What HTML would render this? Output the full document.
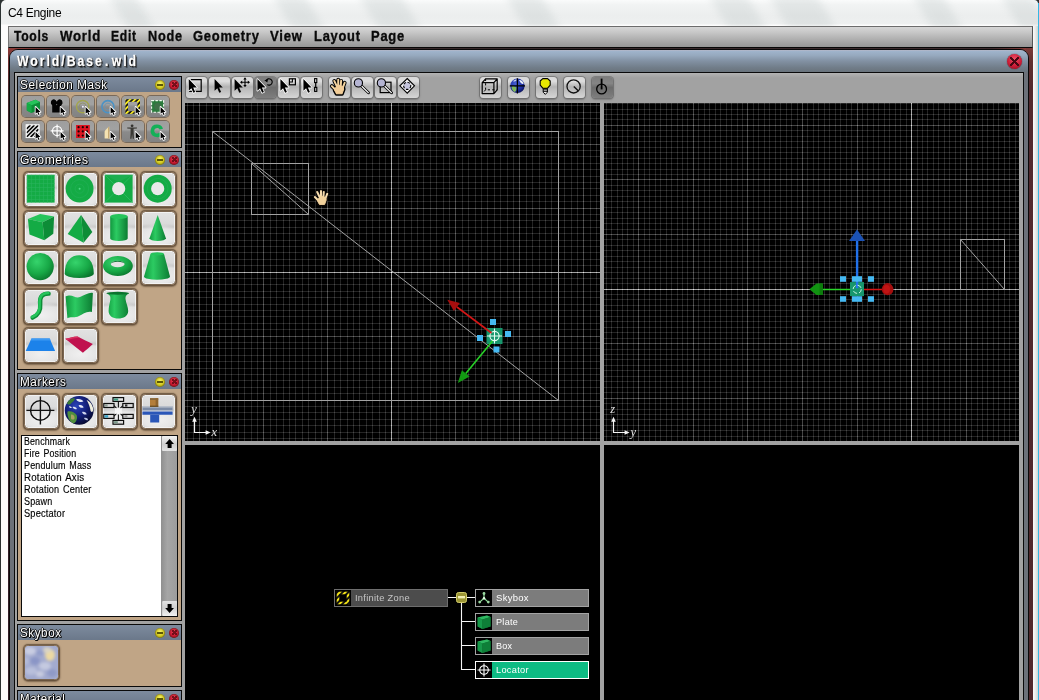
<!DOCTYPE html><html><head><meta charset="utf-8"><title>C4 Engine</title><style>
*{box-sizing:border-box;margin:0;padding:0}
html,body{width:1039px;height:700px;overflow:hidden;background:#2c3232;font-family:"Liberation Sans",sans-serif;}
.abs{position:absolute}
#frame{position:absolute;left:0;top:0;width:1039px;height:700px;overflow:hidden}
#fbg{position:absolute;left:1px;top:0;width:1036.6px;height:700px;border-radius:5px 4px 0 0;background:linear-gradient(180deg,#fafbfb 0,#f1f3f3 5px,#eceeee 16px,#eef0f0 24px,#fdfdfd 25px,#fdfdfd 26px);overflow:hidden}
#wtitle{position:absolute;left:8px;top:5.8px;font-size:12px;color:#000;letter-spacing:-.3px;white-space:nowrap}
#menubar{position:absolute;left:8px;top:26px;width:1025px;height:22px;border-top:1px solid #6c6c6c;border-bottom:1px solid #080808;border-left:1px solid #777;border-right:1px solid #555;background:linear-gradient(180deg,#d6d6d6 0,#c8c8c8 25%,#a6a6a6 75%,#969696 100%)}
.mi{position:absolute;top:-1.2px;height:20px;line-height:20px;font-size:15.2px;font-weight:bold;letter-spacing:.9px;color:#0a0a0a;white-space:nowrap;transform-origin:0 50%;-webkit-text-stroke:.35px #0a0a0a}
#brown{position:absolute;left:8px;top:48px;width:1025px;height:652px;background:linear-gradient(90deg,rgba(0,0,0,0) 0,rgba(0,0,0,0) 12px,#3a2829 60px,#36282a 50%,#3c2a2c 96%,rgba(0,0,0,0) 99.5%),linear-gradient(180deg,#8c3c38 0,#7a3434 8px,#4a282c 40px,#34202a 90px);}
#brownr{position:absolute;left:1026px;top:48px;width:7px;height:652px;background:linear-gradient(180deg,#7c3a38 0,#60302f 14px,#522a2e 40px,#50282c 100%)}
#iwin{position:absolute;left:9px;top:49px;width:1020px;height:660px;border:1px solid #0a0a0a;border-radius:9px 9px 0 0;background:#6c7179;overflow:hidden}
#ititle{position:absolute;left:0;top:0;width:1018px;height:22px;background:linear-gradient(180deg,#b6b8c8 0,#9fb3cb 1.5px,#96a9be 25%,#8291a3 50%,#717d89 80%,#69737c 100%)}
#ititle span{position:absolute;left:7px;top:1px;font-size:14.4px;font-weight:bold;letter-spacing:2.3px;color:#fff;white-space:nowrap;line-height:20px;-webkit-text-stroke:.3px #fff;text-shadow:1px 1px 0 #111,1px 0 0 #222,0 1px 0 #222,2px 2px 1px rgba(0,0,0,.5);transform-origin:0 50%}
#content{position:absolute;left:14px;top:72px;width:1010px;height:640px;border:1px solid #0a0a0a;background:linear-gradient(180deg,#b4b4b4 0,#a8a8a8 3px,#a2a2a2 5px)}
.pal{position:absolute;left:17px;width:165px;border:1px solid #0a0a0a;background:#c0a586;overflow:hidden}
.ph{position:absolute;left:0;top:0;width:163px;height:14.6px;background:linear-gradient(180deg,#7d8b9e,#6b788a)}
.ph span{position:absolute;left:2.4px;top:.8px;font-size:12px;line-height:15px;color:#fff;letter-spacing:.6px;white-space:nowrap;text-shadow:1px 1px 0 #000,-1px 0 0 #222,0 -1px 0 #333,1px 0 0 #111,0 1px 0 #111;transform-origin:0 50%}
.cy,.cr{position:absolute;top:2.7px;box-shadow:inset 0 0 1.5px .5px rgba(40,30,0,.55);width:10px;height:10px;border-radius:50%}
.cy{left:137px;background:radial-gradient(circle at 50% 35%,#f4f060 0,#d6cc20 55%,#8f8a10 100%)}
.cy:after{content:"";position:absolute;left:2px;top:4px;width:6px;height:2px;background:#5a5608}
.cr{left:151px;background:radial-gradient(circle at 50% 35%,#f04058 0,#c81830 55%,#7a0c18 100%)}
.cr:after{content:"";position:absolute;left:2.5px;top:2.5px;width:5px;height:5px;opacity:.8;background:linear-gradient(45deg,transparent 38%,#5a0810 38%,#5a0810 62%,transparent 62%),linear-gradient(-45deg,transparent 38%,#5a0810 38%,#5a0810 62%,transparent 62%)}
#iclose{position:absolute;left:1006.5px;top:53.5px;width:15px;height:15px;border-radius:50%;background:radial-gradient(circle at 50% 35%,#f05068 0,#cc1c36 55%,#800c1c 100%);box-shadow:0 0 1px #300}
#iclose:after{content:"";position:absolute;left:3px;top:3px;width:9px;height:9px;background:linear-gradient(45deg,transparent 43%,#4a0812 43%,#4a0812 57%,transparent 57%),linear-gradient(-45deg,transparent 43%,#4a0812 43%,#4a0812 57%,transparent 57%)}
.vp{position:absolute;background:#000;overflow:hidden}
.tb{position:absolute;top:76.5px;width:21px;height:21px;border-radius:3.5px;background:linear-gradient(180deg,#d8d8d8 0,#dedede 20%,#b2b2b2 47%,#bcbcbc 58%,#d6d6d6 100%);box-shadow:0 0 0 1px rgba(100,100,100,.55),0 1px 1.5px 1px rgba(60,60,60,.35)}
.tb.dn{background:linear-gradient(180deg,#7c7c7c 0,#858585 30%,#6c6c6c 50%,#7e7e7e 100%);}
.tb svg{position:absolute;left:-.6px;top:-.2px}
.sb{position:absolute;width:21.5px;height:21.8px;border-radius:4px;box-shadow:0 0 0 1px #78695a;background:linear-gradient(180deg,#9e9e9e 0,#a2a2a2 40%,#8a8a8a 52%,#828282 100%);overflow:hidden}
.gb{position:absolute;width:35px;height:35px;border-radius:4.5px;background:radial-gradient(ellipse 75% 40% at 50% 76%,#f0f0f0 0,#e6e6e6 60%,rgba(230,230,230,0) 100%),linear-gradient(180deg,#e2e2e2 0,#dadada 36%,#c8c8c8 46%,#dedede 53%,#dcdcdc 80%,#c4c4c4 100%);border:1.6px solid #7a6550;box-shadow:inset 0 0 0 .8px #f8f8f8,0 0 1.2px .4px rgba(90,70,50,.8),0 1.2px 1.5px .5px rgba(80,60,40,.5);overflow:hidden}
.gb svg{position:absolute;left:-1.8px;top:-1.9px}.sb svg{position:absolute;left:0;top:0}
.li{position:absolute;left:1.8px;-webkit-text-stroke:.15px #000;font-size:10px;line-height:12px;color:#000;white-space:nowrap;letter-spacing:.2px;word-spacing:1px;transform-origin:0 50%}
.nd{position:absolute;height:18px;border:1px solid #9c9c9c;background:#7a7a7a}
.nd i{position:absolute;left:0;top:0;width:16px;height:16px;background:#000;display:block}
.nd span{position:absolute;left:19.6px;top:0;font-size:9.6px;line-height:16px;color:#fff;white-space:nowrap;letter-spacing:.3px;transform-origin:0 50%}
</style></head><body>
<div id="frame">
<div class="abs" style="left:1037.4px;top:3px;width:2px;height:700px;background:#33b7e4"></div>
<div id="fbg"><svg width="1037" height="26" style="position:absolute;left:0;top:0"><defs><filter id="sb" x="-5%" y="-50%" width="110%" height="200%"><feGaussianBlur stdDeviation="4 1"/></filter></defs><g fill="#9aa8a8" opacity=".17" filter="url(#sb)"><path d="M108 -4L134 -4L154 30L128 30Z"/><path d="M272 -4L304 -4L324 30L292 30Z"/><path d="M358 -4L400 -4L420 30L378 30Z"/><path d="M505 -4L540 -4L560 30L525 30Z"/><path d="M708 -4L746 -4L766 30L728 30Z"/><path d="M768 -4L816 -4L836 30L788 30Z"/><path d="M912 -4L942 -4L962 30L932 30Z"/><path d="M1000 -4L1030 -4L1050 30L1020 30Z"/></g></svg><div class="abs" style="left:1032px;top:26px;width:5px;height:680px;background:linear-gradient(90deg,#fbfbfb,#e8ebea 50%,#cfd6d2)"></div></div>
<div id="wtitle">C4 Engine</div>
<div id="menubar">
<span class="mi" id="m0" style="left:5.4px;transform:scaleX(0.7977);">Tools</span>
<span class="mi" id="m1" style="left:51.4px;transform:scaleX(0.8677);">World</span>
<span class="mi" id="m2" style="left:102.4px;transform:scaleX(0.7988);">Edit</span>
<span class="mi" id="m3" style="left:139.4px;transform:scaleX(0.837);">Node</span>
<span class="mi" id="m4" style="left:184.4px;transform:scaleX(0.8527);">Geometry</span>
<span class="mi" id="m5" style="left:261.4px;transform:scaleX(0.8646);">View</span>
<span class="mi" id="m6" style="left:305.4px;transform:scaleX(0.848);">Layout</span>
<span class="mi" id="m7" style="left:362.4px;transform:scaleX(0.852);">Page</span>
</div>
<div id="brown"></div><div id="brownr"></div>
<div id="iwin"><div id="ititle"><span id="it" style="transform:scaleX(0.8515);">World/Base<b style="margin:0 1.5px 0 1.5px;font-weight:bold">.</b>wld</span></div></div>
<div id="iclose"></div>
<div id="content"></div>
<svg width="0" height="0" style="position:absolute"><defs>
<linearGradient id="gv" x1="0" y1="0" x2="0" y2="1"><stop offset="0" stop-color="#2cc862"/><stop offset="1" stop-color="#0e8c38"/></linearGradient>
<linearGradient id="gh" x1="0" y1="0" x2="1" y2="0"><stop offset="0" stop-color="#11983e"/><stop offset=".35" stop-color="#2ccb62"/><stop offset="1" stop-color="#0c7c32"/></linearGradient>
<radialGradient id="gs" cx=".38" cy=".32" r=".75"><stop offset="0" stop-color="#36d46c"/><stop offset=".6" stop-color="#17a846"/><stop offset="1" stop-color="#0a742c"/></radialGradient>
<radialGradient id="earth" cx=".4" cy=".35" r=".75"><stop offset="0" stop-color="#2c44b8"/><stop offset=".5" stop-color="#121e78"/><stop offset="1" stop-color="#03051e"/></radialGradient>
<pattern id="gridp" width="4" height="4" patternUnits="userSpaceOnUse"><path d="M0 .5H4M.5 0V4" stroke="#2ab45f" stroke-width=".5" fill="none"/></pattern>
</defs></svg>
<div class="pal" style="top:76px;height:72px"><div class="ph"><span class="pt" id="pt0" style="transform:scaleX(0.9757);">Selection Mask</span><div class="cy"></div><div class="cr"></div></div><div class="sb" style="left:4.3px;top:18.5px"><svg width="21.5" height="21.8" viewBox="0 0 21.5 21.8"><path d="M4.8 7L13.4 3.8L18 6V13.6L9.6 17L4.8 14.4Z" fill="#0d8d37"/><path d="M4.8 7L13.4 3.8L18 6L9.6 9.2Z" fill="#26c45b"/><path d="M4.8 7L9.6 9.2V17L4.8 14.4Z" fill="#14ab45"/><path transform="translate(13.6,10.9)" d="M0 0V6.8L1.7 5.4L2.9 8L4 7.5L2.8 5H4.9Z" fill="#fff" stroke="#fff" stroke-width="1.7" stroke-linejoin="round"/><path transform="translate(13.6,10.9)" d="M0 0V6.8L1.7 5.4L2.9 8L4 7.5L2.8 5H4.9Z" fill="#000"/></svg></div><div class="sb" style="left:29.3px;top:18.5px"><svg width="21.5" height="21.8" viewBox="0 0 21.5 21.8"><path d="M5.2 16.6V9.6L3.9 7.6C3.6 5 5 3.6 6.8 3.6C8 3.6 8.8 4.4 9 5.2H10.4C10.6 4.4 11.4 3.6 12.6 3.6C14.4 3.6 15.8 5 15.5 7.6L14.2 9.6V16.6Z" fill="#030303"/><circle cx="6.8" cy="5.6" r="2.2" fill="#030303"/><circle cx="12.6" cy="5.6" r="2.2" fill="#030303"/><circle cx="9.6" cy="8.6" r=".7" fill="#666"/><path transform="translate(13.6,10.9)" d="M0 0V6.8L1.7 5.4L2.9 8L4 7.5L2.8 5H4.9Z" fill="#fff" stroke="#fff" stroke-width="1.7" stroke-linejoin="round"/><path transform="translate(13.6,10.9)" d="M0 0V6.8L1.7 5.4L2.9 8L4 7.5L2.8 5H4.9Z" fill="#000"/></svg></div><div class="sb" style="left:54.3px;top:18.5px"><svg width="21.5" height="21.8" viewBox="0 0 21.5 21.8"><circle cx="10.7" cy="10.6" r="6.2" fill="none" stroke="#a2a44e" stroke-width="1.5"/><circle cx="10.7" cy="10.6" r="3.6" fill="none" stroke="#8f9060" stroke-width=".8"/><circle cx="10.9" cy="10.7" r="1" fill="#eeeefc"/><path transform="translate(13.6,10.9)" d="M0 0V6.8L1.7 5.4L2.9 8L4 7.5L2.8 5H4.9Z" fill="#fff" stroke="#fff" stroke-width="1.7" stroke-linejoin="round"/><path transform="translate(13.6,10.9)" d="M0 0V6.8L1.7 5.4L2.9 8L4 7.5L2.8 5H4.9Z" fill="#000"/></svg></div><div class="sb" style="left:79.3px;top:18.5px"><svg width="21.5" height="21.8" viewBox="0 0 21.5 21.8"><circle cx="10.9" cy="10.6" r="6" fill="none" stroke="#4c92c4" stroke-width="1.6"/><circle cx="10.9" cy="10.6" r="3.4" fill="none" stroke="#6c93b0" stroke-width=".9"/><path transform="translate(13.6,10.9)" d="M0 0V6.8L1.7 5.4L2.9 8L4 7.5L2.8 5H4.9Z" fill="#fff" stroke="#fff" stroke-width="1.7" stroke-linejoin="round"/><path transform="translate(13.6,10.9)" d="M0 0V6.8L1.7 5.4L2.9 8L4 7.5L2.8 5H4.9Z" fill="#000"/></svg></div><div class="sb" style="left:104.3px;top:18.5px"><svg width="21.5" height="21.8" viewBox="0 0 21.5 21.8"><defs><pattern id="hz2" width="3.6" height="3.6" patternUnits="userSpaceOnUse" patternTransform="rotate(45)"><rect width="1.9" height="3.6" fill="#f6e81a"/><rect x="1.9" width="1.7" height="3.6" fill="#0c0c0c"/></pattern></defs><rect x="4.7" y="4.5" width="12" height="12" fill="none" stroke="url(#hz2)" stroke-width="2.6"/><path transform="translate(13.6,10.9)" d="M0 0V6.8L1.7 5.4L2.9 8L4 7.5L2.8 5H4.9Z" fill="#fff" stroke="#fff" stroke-width="1.7" stroke-linejoin="round"/><path transform="translate(13.6,10.9)" d="M0 0V6.8L1.7 5.4L2.9 8L4 7.5L2.8 5H4.9Z" fill="#000"/></svg></div><div class="sb" style="left:129.3px;top:18.5px"><svg width="21.5" height="21.8" viewBox="0 0 21.5 21.8"><rect x="4.6" y="4.6" width="12" height="11.6" fill="#2a7a3c"/><circle cx="10.6" cy="10.4" r="3.4" fill="#3f7048"/><rect x="4.6" y="4.6" width="12" height="11.6" fill="none" stroke="#f0fff0" stroke-width="1.1" stroke-dasharray="2.4 1.5"/><path transform="translate(13.6,10.9)" d="M0 0V6.8L1.7 5.4L2.9 8L4 7.5L2.8 5H4.9Z" fill="#fff" stroke="#fff" stroke-width="1.7" stroke-linejoin="round"/><path transform="translate(13.6,10.9)" d="M0 0V6.8L1.7 5.4L2.9 8L4 7.5L2.8 5H4.9Z" fill="#000"/></svg></div><div class="sb" style="left:4.3px;top:43.7px"><svg width="21.5" height="21.8" viewBox="0 0 21.5 21.8"><rect x="3.8" y="3.4" width="13.6" height="13.6" fill="#f4f4f4"/><path d="M4.6 8L8.4 4.2M4.6 12L12.4 4.2M4.6 16L16.4 4.2M8.6 16.2L16.6 8.2M12.6 16.2L16.6 12.2" stroke="#0a0a0a" stroke-width="1.7"/><rect x="4.2" y="3.8" width="12.8" height="12.8" fill="none" stroke="#f4f4f4" stroke-width="1"/><path transform="translate(13.6,10.9)" d="M0 0V6.8L1.7 5.4L2.9 8L4 7.5L2.8 5H4.9Z" fill="#fff" stroke="#fff" stroke-width="1.7" stroke-linejoin="round"/><path transform="translate(13.6,10.9)" d="M0 0V6.8L1.7 5.4L2.9 8L4 7.5L2.8 5H4.9Z" fill="#000"/></svg></div><div class="sb" style="left:29.3px;top:43.7px"><svg width="21.5" height="21.8" viewBox="0 0 21.5 21.8"><circle cx="10.1" cy="9.9" r="4.6" fill="none" stroke="#fff" stroke-width="1.2"/><path d="M10.1 3.4V16.4M3.6 9.9H16.6" stroke="#fff" stroke-width="1.2"/><path transform="translate(13.6,10.9)" d="M0 0V6.8L1.7 5.4L2.9 8L4 7.5L2.8 5H4.9Z" fill="#fff" stroke="#fff" stroke-width="1.7" stroke-linejoin="round"/><path transform="translate(13.6,10.9)" d="M0 0V6.8L1.7 5.4L2.9 8L4 7.5L2.8 5H4.9Z" fill="#000"/></svg></div><div class="sb" style="left:54.3px;top:43.7px"><svg width="21.5" height="21.8" viewBox="0 0 21.5 21.8"><rect x="4" y="4" width="13.8" height="13" fill="#dc1420"/><g fill="#160404"><circle cx="6.6" cy="6.2" r="1.1"/><circle cx="10.8" cy="6.2" r="1.1"/><circle cx="15" cy="6.2" r="1.1"/><circle cx="6.6" cy="10.4" r="1.1"/><circle cx="10.8" cy="10.4" r="1.1"/><circle cx="15" cy="10.4" r="1.1"/><circle cx="6.6" cy="14.6" r="1.1"/><circle cx="10.8" cy="14.6" r="1.1"/></g><path transform="translate(13.6,10.9)" d="M0 0V6.8L1.7 5.4L2.9 8L4 7.5L2.8 5H4.9Z" fill="#fff" stroke="#fff" stroke-width="1.7" stroke-linejoin="round"/><path transform="translate(13.6,10.9)" d="M0 0V6.8L1.7 5.4L2.9 8L4 7.5L2.8 5H4.9Z" fill="#000"/></svg></div><div class="sb" style="left:79.3px;top:43.7px"><svg width="21.5" height="21.8" viewBox="0 0 21.5 21.8"><path d="M7.6 10.6C8.6 8.6 10.8 6.6 12.2 5.6C12 8 12.6 10 12.6 12V17.6H7.6Z" fill="#f4e2b2"/><path d="M11 6.6L12.2 5.6C12 8 12.6 10 12.6 12V17.6H11Z" fill="#c8aa72"/><path transform="translate(13.6,10.9)" d="M0 0V6.8L1.7 5.4L2.9 8L4 7.5L2.8 5H4.9Z" fill="#fff" stroke="#fff" stroke-width="1.7" stroke-linejoin="round"/><path transform="translate(13.6,10.9)" d="M0 0V6.8L1.7 5.4L2.9 8L4 7.5L2.8 5H4.9Z" fill="#000"/></svg></div><div class="sb" style="left:104.3px;top:43.7px"><svg width="21.5" height="21.8" viewBox="0 0 21.5 21.8"><circle cx="10.1" cy="4.8" r="1.4" fill="#34332f"/><path d="M5.2 6.6L8.8 6.4H11.4L15 6.6L14.9 7.6L11.6 7.8V12L12 17.8H10.7L10.1 13L9.5 17.8H8.2L8.6 12V7.8L5.3 7.6Z" fill="#3a3934"/><path transform="translate(13.6,10.9)" d="M0 0V6.8L1.7 5.4L2.9 8L4 7.5L2.8 5H4.9Z" fill="#fff" stroke="#fff" stroke-width="1.7" stroke-linejoin="round"/><path transform="translate(13.6,10.9)" d="M0 0V6.8L1.7 5.4L2.9 8L4 7.5L2.8 5H4.9Z" fill="#000"/></svg></div><div class="sb" style="left:129.3px;top:43.7px"><svg width="21.5" height="21.8" viewBox="0 0 21.5 21.8"><path d="M9.9 3.6A6.3 6.3 0 1 0 15.4 13L12.3 11.4A2.8 2.8 0 1 1 12.6 8.6L16 7.8A6.3 6.3 0 0 0 9.9 3.6Z" fill="#12b058"/><path transform="translate(13.6,10.9)" d="M0 0V6.8L1.7 5.4L2.9 8L4 7.5L2.8 5H4.9Z" fill="#fff" stroke="#fff" stroke-width="1.7" stroke-linejoin="round"/><path transform="translate(13.6,10.9)" d="M0 0V6.8L1.7 5.4L2.9 8L4 7.5L2.8 5H4.9Z" fill="#000"/></svg></div></div>
<div class="pal" style="top:151px;height:219px"><div class="ph"><span class="pt" id="pt1" style="transform:scaleX(1.0084);">Geometries</span><div class="cy"></div><div class="cr"></div></div><div class="gb" style="left:5.9px;top:20.3px"><svg width="35" height="35" viewBox="0 0 35 35"><rect x="3.8" y="3.8" width="27.8" height="27.8" fill="#14ab45"/><rect x="3.8" y="3.8" width="27.8" height="27.8" fill="url(#gridp)"/></svg></div><div class="gb" style="left:44.9px;top:20.3px"><svg width="35" height="35" viewBox="0 0 35 35"><circle cx="17.6" cy="17.7" r="13.9" fill="#14ab45"/><circle cx="17.6" cy="17.7" r="9" fill="none" stroke="#25b059" stroke-width=".6"/><circle cx="17.6" cy="17.7" r="4.5" fill="none" stroke="#25b059" stroke-width=".6"/><circle cx="17.6" cy="17.7" r="1" fill="#4fd884"/></svg></div><div class="gb" style="left:83.9px;top:20.3px"><svg width="35" height="35" viewBox="0 0 35 35"><rect x="3.8" y="3.8" width="27.8" height="27.8" fill="#14ab45"/><path d="M3.8 3.8L31.6 31.6M31.6 3.8L3.8 31.6" stroke="#2cbc62" stroke-width=".8"/><path d="M3.8 3.8L17.7 11L31.6 3.8Z" fill="#23b058" opacity=".6"/><circle cx="17.7" cy="17.7" r="6.6" fill="#e9e9e9"/></svg></div><div class="gb" style="left:122.9px;top:20.3px"><svg width="35" height="35" viewBox="0 0 35 35"><circle cx="17.7" cy="17.7" r="14" fill="#14ab45"/><circle cx="17.7" cy="17.7" r="10.3" fill="none" stroke="#25b059" stroke-width=".6"/><circle cx="17.7" cy="17.7" r="6.6" fill="#e9e9e9"/></svg></div><div class="gb" style="left:5.9px;top:59.3px"><svg width="35" height="35" viewBox="0 0 35 35"><path d="M4.9 9L17.2 4.1L31.1 6.5L19.6 12.3Z" fill="#26c45b"/><path d="M4.9 9L19.6 12.3L21.3 30.3L6.5 24.5Z" fill="#14ab45"/><path d="M19.6 12.3L31.1 6.5L30.3 23.7L21.3 30.3Z" fill="#0d8d37"/></svg></div><div class="gb" style="left:44.9px;top:59.3px"><svg width="35" height="35" viewBox="0 0 35 35"><path d="M19.1 4.9L5.7 24L21.6 32.7Z" fill="#14ab45"/><path d="M19.1 4.9L21.6 32.7L30.3 22.1Z" fill="#0d8d37"/></svg></div><div class="gb" style="left:83.9px;top:59.3px"><svg width="35" height="35" viewBox="0 0 35 35"><path d="M9.2 6.5V28.4A8.75 2.6 0 0 0 26.7 28.4V6.5Z" fill="url(#gh)"/><ellipse cx="17.95" cy="6.5" rx="8.75" ry="2.4" fill="#26c45b"/></svg></div><div class="gb" style="left:122.9px;top:59.3px"><svg width="35" height="35" viewBox="0 0 35 35"><path d="M17.7 4.9L9.5 28.3A8.2 2.6 0 0 0 25.9 28.3Z" fill="url(#gh)"/></svg></div><div class="gb" style="left:5.9px;top:98.3px"><svg width="35" height="35" viewBox="0 0 35 35"><circle cx="17.2" cy="17.6" r="13.6" fill="url(#gs)"/></svg></div><div class="gb" style="left:44.9px;top:98.3px"><svg width="35" height="35" viewBox="0 0 35 35"><path d="M2.7 24.5C2.7 12 9 6.2 17.2 6.2C25.5 6.2 31.8 12 31.8 24.5A14.55 4.6 0 0 1 2.7 24.5Z" fill="url(#gs)"/></svg></div><div class="gb" style="left:83.9px;top:98.3px"><svg width="35" height="35" viewBox="0 0 35 35"><ellipse cx="16.9" cy="17" rx="14.9" ry="10" fill="url(#gs)"/><ellipse cx="16.7" cy="15" rx="6.9" ry="3.3" fill="#e4e4e4"/><path d="M9.8 15A6.9 3.3 0 0 1 23.6 15A6.9 2.2 0 0 0 9.8 15Z" fill="#0d7a34"/></svg></div><div class="gb" style="left:122.9px;top:98.3px"><svg width="35" height="35" viewBox="0 0 35 35"><path d="M10.5 4.9L4 27.4A13 3.4 0 0 0 30 27.4L24 4.9Z" fill="url(#gh)"/><ellipse cx="17.25" cy="4.9" rx="6.75" ry="1.6" fill="#26c45b"/></svg></div><div class="gb" style="left:5.9px;top:137.3px"><svg width="35" height="35" viewBox="0 0 35 35"><path d="M25.6 5.6C18 5.5 16.5 10 17.2 16.5C18 24.5 14 27.5 9.6 29.6" fill="none" stroke="#0d8d37" stroke-width="4.4" stroke-linecap="round"/><path d="M25.2 5C18 5 16 10 16.6 16.5C17.3 24 13.6 27 9.2 29" fill="none" stroke="#26c45b" stroke-width="2.6" stroke-linecap="round"/></svg></div><div class="gb" style="left:44.9px;top:137.3px"><svg width="35" height="35" viewBox="0 0 35 35"><path d="M3.6 8.5C10 5 13 11 18 9C23 7 27 4 30.9 4.9L29.9 24C25 22.5 21 26 17 28C12 30.5 9 28 5.4 30.3Z" fill="url(#gh)"/></svg></div><div class="gb" style="left:83.9px;top:137.3px"><svg width="35" height="35" viewBox="0 0 35 35"><path d="M5.4 5.3C9 7 9.8 8.5 9.4 11.5C8.8 15 7.6 19 7.6 23C7.6 28 12 30.6 17.2 30.6C22.5 30.6 27.2 28 27.2 23C27.2 19 25 15 24.6 11.5C24.3 8.5 25 7 28.1 5.3Z" fill="url(#gh)"/><ellipse cx="16.75" cy="5.3" rx="11.35" ry="1.5" fill="#0a732e"/></svg></div><div class="gb" style="left:5.9px;top:176.3px"><svg width="35" height="35" viewBox="0 0 35 35"><path d="M8.5 11.6H26.7L32.1 24H2.7Z" fill="#1c82ea"/><path d="M8.5 11.6H26.7L27.6 13.6H7.6Z" fill="#3c9af4"/></svg></div><div class="gb" style="left:44.9px;top:176.3px"><svg width="35" height="35" viewBox="0 0 35 35"><path d="M3.3 11.8C7 10.8 11 9.6 15.4 9.4C21 12 26 14.6 30.9 17.1C27.5 20 24.5 23 20.9 25.8C15 21 9 16.5 3.3 11.8Z" fill="#c0124e"/><path d="M3.3 11.8C7 10.8 11 9.6 15.4 9.4L18 10.6C13 11 9 12 5.2 13.2Z" fill="#d8305f"/></svg></div></div>
<div class="pal" style="top:373px;height:248px"><div class="ph"><span class="pt" id="pt2" style="transform:scaleX(0.9759);">Markers</span><div class="cy"></div><div class="cr"></div></div><div class="gb" style="left:5.9px;top:20.3px"><svg width="35" height="35" viewBox="0 0 35 35"><circle cx="17.4" cy="17.4" r="9.8" fill="none" stroke="#111" stroke-width="1.4"/><path d="M17.4 3.4V31.4M3.4 17.4H31.4" stroke="#111" stroke-width="1.4"/></svg></div><div class="gb" style="left:44.9px;top:20.3px"><svg width="35" height="35" viewBox="0 0 35 35"><defs><filter id="eb" x="-10%" y="-10%" width="120%" height="120%"><feGaussianBlur stdDeviation=".55"/></filter><clipPath id="ec"><circle cx="17.2" cy="17.4" r="14.2"/></clipPath></defs><circle cx="17.2" cy="17.4" r="14.4" fill="url(#earth)"/><g clip-path="url(#ec)" filter="url(#eb)"><path d="M5 9C7 6 10.5 4.6 13 5.6C12.4 8.4 10 9.6 8 11.4C6.4 12 4.8 11 5 9Z" fill="#3b7a36"/><path d="M5.6 18.6C8.6 17.6 12.4 19 14.6 22C16 25.6 14 29.4 11 31C7.4 28.4 4.8 23.4 5.6 18.6Z" fill="#4f8f3c"/><path d="M9 21.6C11 21.4 12.8 23 12.6 25.4C11.4 27 9.8 27 9 25.4Z" fill="#a9a264"/><path d="M24.6 7C27.6 8 30.4 11.4 31.2 15.4C31.4 18.6 30 20 28.6 18C28 14 26.6 10.4 24.6 7Z" fill="#efeedd"/><path d="M14 6.4C17 5.4 20.4 6.4 21.4 8.6C19 9.6 16 8.8 14 6.4Z" fill="#e6eaf6"/><path d="M16.6 12.4C18.8 11.4 21 12.4 21.6 14.4C19.4 15.2 17.4 14.4 16.6 12.4Z" fill="#e6eaf6"/><path d="M10.6 14C12.6 13.2 14.4 14.2 14.8 16C13 16.6 11.2 15.8 10.6 14Z" fill="#dfe4f2"/><path d="M20 19C22.4 18.4 24.4 19.6 24.6 21.4C22.6 22 20.6 21 20 19Z" fill="#cfd6ee"/><path d="M7 13.4C8.4 13 9.6 13.8 9.8 15C8.6 15.4 7.4 14.8 7 13.4Z" fill="#e4e8f4"/><path d="M22 25C24 24.4 26 25.4 26 27C24.4 27.6 22.6 26.6 22 25Z" fill="#b8c2e4"/></g></svg></div><div class="gb" style="left:83.9px;top:20.3px"><svg width="35" height="35" viewBox="0 0 35 35"><path d="M17.4 8.6V14.4M17.4 21.4V27M13 12.6L15.8 15.6M21.8 12.6L19 15.6M13 23.2L15.8 20.2M21.8 23.2L19 20.2" fill="none" stroke="#111" stroke-width="1.1"/><path d="M14 15H20.8V21H14Z" fill="#fafafa" opacity=".8"/><g stroke="#0c0c0c" stroke-width="1.2"><rect x="12" y="4.6" width="10.6" height="3.8" fill="#e4e4e4"/><rect x="2.8" y="10.5" width="10.2" height="4" fill="#dcdcdc"/><rect x="21.8" y="10.5" width="10.4" height="4" fill="#dcdcdc"/><rect x="2.8" y="21.4" width="10.2" height="4" fill="#dcdcdc"/><rect x="21.8" y="21.4" width="10.4" height="4" fill="#dcdcdc"/><rect x="12" y="27.4" width="10.6" height="3.8" fill="#dcdcdc"/></g><rect x="12.8" y="5.4" width="4.4" height="2.2" fill="#3f9a82"/><rect x="3.6" y="22.2" width="3.6" height="2.4" fill="#3aa6c8"/><rect x="4" y="11.4" width="2.6" height="2.2" fill="#8a9a90"/><rect x="24" y="11.4" width="2.4" height="2.2" fill="#303030"/><rect x="12.8" y="28.2" width="4" height="2.2" fill="#7a9a8a"/><rect x="23.4" y="22.2" width="3" height="2.2" fill="#9a9a9a"/></svg></div><div class="gb" style="left:122.9px;top:20.3px"><svg width="35" height="35" viewBox="0 0 35 35"><path d="M2.4 13.2H32.6V18H2.4Z" fill="#7d8ca6"/><path d="M2.4 13.2H32.6V14.6H2.4Z" fill="#c4cad2"/><path d="M2.4 17.4H32.6V18.4H2.4Z" fill="#e6e8ee"/><path d="M2.4 18.4H32.6V21.8H2.4Z" fill="#2a56b8"/><path d="M10.2 21.8H19.2V29.4H10.2Z" fill="#2a56b8"/><rect x="10" y="5.2" width="8.2" height="8.8" fill="#b47e3a"/><rect x="10" y="5.2" width="8.2" height="1.8" fill="#86683c"/><rect x="15.6" y="5.2" width="2.6" height="8.8" fill="#8e642e"/><rect x="10" y="12.6" width="8.2" height="1.4" fill="#6e5226"/></svg></div><div class="abs" style="left:3px;top:61px;width:157px;height:182px;border:1px solid #0a0a0a;background:#fff;overflow:hidden"><div class="li" id="li0" style="top:-0.4px;transform:scaleX(0.878);">Benchmark</div><div class="li" id="li1" style="top:11.6px;transform:scaleX(0.8836);">Fire Position</div><div class="li" id="li2" style="top:23.6px;transform:scaleX(0.8949);">Pendulum Mass</div><div class="li" id="li3" style="top:35.6px;transform:scaleX(0.9731);">Rotation Axis</div><div class="li" id="li4" style="top:47.6px;transform:scaleX(0.9102);">Rotation Center</div><div class="li" id="li5" style="top:59.6px;transform:scaleX(0.8994);">Spawn</div><div class="li" id="li6" style="top:71.6px;transform:scaleX(0.9236);">Spectator</div><div class="abs" style="left:139.3px;top:0;width:15.7px;height:180px;background:linear-gradient(90deg,#8f8f8f,#a6a6a6 40%,#9c9c9c)"></div><div class="abs" style="left:139.6px;top:.4px;width:15.2px;height:15px;border-radius:1px;background:linear-gradient(180deg,#f2f2f2,#cfcfcf 55%,#e2e2e2)"><svg width="15" height="15" viewBox="-.6 -.5 15 15" style="position:absolute;left:0;top:0"><path d="M7 2.6L2.6 7.4H5V11.4H9V7.4H11.4Z" fill="#000"/></svg></div><div class="abs" style="left:139.6px;top:164.6px;width:15.2px;height:15px;border-radius:1px;background:linear-gradient(180deg,#f2f2f2,#cfcfcf 55%,#e2e2e2);transform:rotate(180deg)"><svg width="15" height="15" viewBox="-.6 -.5 15 15" style="position:absolute;left:0;top:0"><path d="M7 2.6L2.6 7.4H5V11.4H9V7.4H11.4Z" fill="#000"/></svg></div></div></div>
<div class="pal" style="top:624px;height:63px"><div class="ph"><span class="pt" id="pt3" style="transform:scaleX(0.9685);">Skybox</span><div class="cy"></div><div class="cr"></div></div><div class="gb" style="left:5.9px;top:20px"><svg width="35" height="35" viewBox="0 0 35 35"><defs><filter id="bl" x="-20%" y="-20%" width="140%" height="140%"><feGaussianBlur stdDeviation="1.6"/></filter></defs><rect width="35" height="35" fill="#a3abcf"/><g filter="url(#bl)"><ellipse cx="7" cy="7" rx="6" ry="4" fill="#c9cde2"/><ellipse cx="27" cy="11" rx="5" ry="6" fill="#ecd9a2"/><ellipse cx="24" cy="6" rx="4" ry="3" fill="#d9d4c4"/><ellipse cx="12" cy="17" rx="5" ry="4" fill="#8a95c6"/><ellipse cx="22" cy="22" rx="6" ry="4" fill="#c4c9e0"/><ellipse cx="8" cy="27" rx="6" ry="4" fill="#b9c0dc"/><ellipse cx="29" cy="29" rx="5" ry="4" fill="#8f9ac8"/><ellipse cx="17" cy="9" rx="4" ry="3" fill="#929dca"/><ellipse cx="17" cy="30" rx="4" ry="3" fill="#c8cce0"/><ellipse cx="3" cy="17" rx="3" ry="4" fill="#b4bbd8"/></g></svg></div></div>
<div class="pal" style="top:690px;height:40px"><div class="ph"><span class="pt" id="pt4" style="transform:scaleX(0.9561);">Material</span><div class="cy"></div><div class="cr"></div></div></div>
<div class="tb" style="left:185.5px"><svg width="21" height="21" viewBox="0 0 21 21"><path d="M5.8 3.6H16.2V15.4H3.8" fill="none" stroke="#000" stroke-width="1.2"/><path transform="translate(3.7,3.1)" d="M0 0V11.6L2.7 9.1L4.7 13.7L6.5 12.9L4.5 8.5H8.2Z" fill="#fff" stroke="#fff" stroke-width="1.6" stroke-linejoin="round"/><path transform="translate(3.7,3.1)" d="M0 0V11.6L2.7 9.1L4.7 13.7L6.5 12.9L4.5 8.5H8.2Z" fill="#000"/></svg></div>
<div class="tb" style="left:208.5px"><svg width="21" height="21" viewBox="0 0 21 21"><path transform="translate(6.6,3.1)" d="M0 0V11.6L2.7 9.1L4.7 13.7L6.5 12.9L4.5 8.5H8.2Z" fill="#000"/></svg></div>
<div class="tb" style="left:231.5px"><svg width="21" height="21" viewBox="0 0 21 21"><path transform="translate(3.6,3.1)" d="M0 0V11.6L2.7 9.1L4.7 13.7L6.5 12.9L4.5 8.5H8.2Z" fill="#000"/><path d="M14 2.4V10M10.2 6.2H17.8" stroke="#000" stroke-width="1.1" fill="none"/><path d="M14 1.2L12.3 3.4H15.7ZM14 11.2L12.3 9H15.7ZM9 6.2L11.2 4.5V7.9ZM19 6.2L16.8 4.5V7.9Z" fill="#000"/></svg></div>
<div class="tb dn" style="left:254.5px"><svg width="21" height="21" viewBox="0 0 21 21"><path d="M12.2 4.4A3.2 3.2 0 1 1 13.2 8.6" fill="none" stroke="#000" stroke-width="1.1"/><path d="M10.3 4.3L14 3.2L13.3 6.6Z" fill="#000"/><path transform="translate(3.4,3.1)" d="M0 0V11.6L2.7 9.1L4.7 13.7L6.5 12.9L4.5 8.5H8.2Z" fill="#fff" stroke="#fff" stroke-width="1.6" stroke-linejoin="round"/><path transform="translate(3.4,3.1)" d="M0 0V11.6L2.7 9.1L4.7 13.7L6.5 12.9L4.5 8.5H8.2Z" fill="#000"/></svg></div>
<div class="tb" style="left:277.5px"><svg width="21" height="21" viewBox="0 0 21 21"><path transform="translate(3.4,3.1)" d="M0 0V11.6L2.7 9.1L4.7 13.7L6.5 12.9L4.5 8.5H8.2Z" fill="#fff" stroke="#fff" stroke-width="1.6" stroke-linejoin="round"/><path transform="translate(3.4,3.1)" d="M0 0V11.6L2.7 9.1L4.7 13.7L6.5 12.9L4.5 8.5H8.2Z" fill="#000"/><rect x="12.4" y="2.8" width="6" height="6" fill="none" stroke="#000" stroke-width="1.2"/><path d="M12.4 6H15.4V2.8" fill="none" stroke="#000" stroke-width="1.1"/></svg></div>
<div class="tb" style="left:300.5px"><svg width="21" height="21" viewBox="0 0 21 21"><path transform="translate(3.4,3.1)" d="M0 0V11.6L2.7 9.1L4.7 13.7L6.5 12.9L4.5 8.5H8.2Z" fill="#fff" stroke="#fff" stroke-width="1.6" stroke-linejoin="round"/><path transform="translate(3.4,3.1)" d="M0 0V11.6L2.7 9.1L4.7 13.7L6.5 12.9L4.5 8.5H8.2Z" fill="#000"/><path d="M15.7 6.5V11.5" stroke="#000" stroke-width="1.2"/><rect x="14.6" y="2.6" width="2.2" height="4" fill="none" stroke="#000" stroke-width="1.1"/><rect x="14.6" y="11.4" width="2.2" height="4" fill="none" stroke="#000" stroke-width="1.1"/></svg></div>
<div class="tb" style="left:328.5px"><svg width="21" height="21" viewBox="0 0 21 21"><g transform="translate(1.9,1.8) scale(1.04)"><g fill="none" stroke-linecap="round" stroke-linejoin="round"><g stroke="#000" stroke-width="3.7"><path d="M1.9 8L5.8 12M4.2 3L6.6 8M8 1.9V7.5M10.8 2.9L10.4 7.8M14.2 4.8L12.6 9"/><path d="M5.6 9.5L12.8 9L13.2 11L11.6 15.4H6.4L4.6 12Z" fill="#000"/></g><g stroke="#f4d4a0" stroke-width="1.9"><path d="M1.9 8L5.8 12M4.2 3L6.6 8M8 1.9V7.5M10.8 2.9L10.4 7.8M14.2 4.8L12.6 9"/></g><path d="M5.6 9.5L8 6.8L12.8 8.6L13.2 11L11.6 15.4H6.4L4.6 12Z" fill="#f2cd98" stroke="#f2cd98" stroke-width="1"/></g></g></svg></div>
<div class="tb" style="left:351.5px"><svg width="21" height="21" viewBox="0 0 21 21"><path d="M10.5 10L17.5 16.8" stroke="#000" stroke-width="2.8" stroke-linecap="round"/><path d="M10.8 10.3L17.3 16.6" stroke="#fff" stroke-width="1.2" stroke-linecap="round"/><circle cx="7.4" cy="6.9" r="4.1" fill="#b4b4d2" stroke="#000" stroke-width="1.1"/></svg></div>
<div class="tb" style="left:374.5px"><svg width="21" height="21" viewBox="0 0 21 21"><rect x="6.2" y="6.2" width="10.8" height="10.4" fill="none" stroke="#000" stroke-width="1.2"/><path d="M10.5 10L17.6 16.8" stroke="#000" stroke-width="2.8" stroke-linecap="round"/><path d="M10.8 10.3L17.4 16.6" stroke="#fff" stroke-width="1.2" stroke-linecap="round"/><circle cx="7.4" cy="6.9" r="4.1" fill="#b4b4d2" stroke="#000" stroke-width="1.1"/></svg></div>
<div class="tb" style="left:397.5px"><svg width="21" height="21" viewBox="0 0 21 21"><path d="M10.2 2.5L17.5 9.8L10.2 17.1L2.9 9.8Z" fill="#f4f4f4" stroke="#000" stroke-width="1.1"/><circle cx="10.2" cy="9.8" r="3.6" fill="#c4c4dc" stroke="#000" stroke-width="1.1" stroke-dasharray="2.6 1.6"/></svg></div>
<div class="tb" style="left:479.5px"><svg width="21" height="21" viewBox="0 0 21 21"><path d="M3.2 6.6H14.9V17.6H3.2ZM3.2 6.6L6.6 2.8H18.2V13.8L14.9 17.6M14.9 6.6L18.2 2.8" fill="none" stroke="#000" stroke-width="1.2" stroke-linejoin="round"/><path d="M6.6 2.8V13.8H18.2M6.6 13.8L3.2 17.6" fill="none" stroke="#000" stroke-width="1" stroke-dasharray="2.2 2.2"/></svg></div>
<div class="tb" style="left:507.5px"><svg width="21" height="21" viewBox="0 0 21 21"><defs><radialGradient id="gl" cx=".4" cy=".35" r=".7"><stop offset="0" stop-color="#4a63d8"/><stop offset=".7" stop-color="#1a2a9c"/><stop offset="1" stop-color="#0a1050"/></radialGradient></defs><circle cx="10.4" cy="9.8" r="7.2" fill="url(#gl)"/><path d="M4.5 10.5C5.5 9.5 8 10 9.5 11.5C9.8 14 8.5 16 7.5 16C5.5 15 4.5 12.5 4.5 10.5Z" fill="#7db45a"/><path d="M12 4C14 3.6 16 5.5 16.8 7.6C15.5 8.4 13.6 7.6 12 4Z" fill="#e8eef8"/><path d="M6 5.2C7.2 4 9 3.4 10 3.6C9.6 5 8 6.2 6 5.2Z" fill="#cfd8f0"/><path d="M10.4 2.2V17.4M2.8 9.8H18" stroke="#000" stroke-width="1.3"/></svg></div>
<div class="tb" style="left:535.5px"><svg width="21" height="21" viewBox="0 0 21 21"><path d="M8.2 12.4H12.4V16.2L10.3 18.4L8.2 16.2Z" fill="#e8e8e8" stroke="#000" stroke-width="1"/><path d="M8.2 13.8H12.4M8.2 15.4H12.4" stroke="#000" stroke-width=".9"/><path d="M7.8 2.6H12.6L15.2 5V9.2L12.6 12.2H7.8L5.2 9.2V5Z" fill="#e9e900" stroke="#000" stroke-width="1.1" stroke-linejoin="round"/></svg></div>
<div class="tb" style="left:563.5px"><svg width="21" height="21" viewBox="0 0 21 21"><circle cx="10.6" cy="10.4" r="6.6" fill="none" stroke="#111" stroke-width="1.3"/><path d="M10.8 10.6L15.2 14.8" stroke="#111" stroke-width="1.4"/></svg></div>
<div class="tb dn" style="left:591.5px"><svg width="21" height="21" viewBox="0 0 21 21"><circle cx="10.6" cy="13" r="4.9" fill="none" stroke="#000" stroke-width="1.3"/><path d="M10.6 2.6V13.4" stroke="#000" stroke-width="1.8"/></svg></div>
<div class="vp" style="left:185px;top:103px;width:415px;height:338px">
<svg width="415" height="338" style="position:absolute;left:0;top:0"><g shape-rendering="crispEdges" fill="none" stroke-width="1"><path d="M2.5 0V338M8.5 0V338M21.5 0V338M27.5 0V338M34.5 0V338M40.5 0V338M46.5 0V338M53.5 0V338M59.5 0V338M66.5 0V338M72.5 0V338M85.5 0V338M91.5 0V338M98.5 0V338M104.5 0V338M110.5 0V338M117.5 0V338M123.5 0V338M130.5 0V338M136.5 0V338M149.5 0V338M155.5 0V338M162.5 0V338M168.5 0V338M174.5 0V338M181.5 0V338M187.5 0V338M194.5 0V338M200.5 0V338M213.5 0V338M219.5 0V338M226.5 0V338M232.5 0V338M238.5 0V338M245.5 0V338M251.5 0V338M258.5 0V338M264.5 0V338M277.5 0V338M283.5 0V338M290.5 0V338M296.5 0V338M302.5 0V338M309.5 0V338M315.5 0V338M322.5 0V338M328.5 0V338M341.5 0V338M347.5 0V338M354.5 0V338M360.5 0V338M366.5 0V338M373.5 0V338M379.5 0V338M386.5 0V338M392.5 0V338M405.5 0V338M411.5 0V338" stroke="#252525"/><path d="M14.5 0V338M78.5 0V338M142.5 0V338M270.5 0V338M334.5 0V338M398.5 0V338" stroke="#454545"/><path d="M206.5 0V338" stroke="#a2a2a2"/><g style="mix-blend-mode:plus-lighter"><path d="M0 2.5H415M0 9.5H415M0 15.5H415M0 21.5H415M0 28.5H415M0 34.5H415M0 47.5H415M0 53.5H415M0 60.5H415M0 66.5H415M0 73.5H415M0 79.5H415M0 85.5H415M0 92.5H415M0 98.5H415M0 111.5H415M0 117.5H415M0 124.5H415M0 130.5H415M0 137.5H415M0 143.5H415M0 149.5H415M0 156.5H415M0 162.5H415M0 175.5H415M0 181.5H415M0 188.5H415M0 194.5H415M0 201.5H415M0 207.5H415M0 213.5H415M0 220.5H415M0 226.5H415M0 239.5H415M0 245.5H415M0 252.5H415M0 258.5H415M0 265.5H415M0 271.5H415M0 277.5H415M0 284.5H415M0 290.5H415M0 303.5H415M0 309.5H415M0 316.5H415M0 322.5H415M0 329.5H415M0 335.5H415" stroke="#252525"/><path d="M0 41.5H415M0 105.5H415M0 233.5H415M0 297.5H415" stroke="#454545"/><path d="M0 169.5H415" stroke="#a2a2a2"/></g></g><g stroke="#a2a2a2" stroke-width="1" fill="none"><rect shape-rendering="crispEdges" x="27.5" y="28.5" width="346" height="269"/><path d="M27.5 28.5L373.5 297.5"/><rect shape-rendering="crispEdges" x="66.5" y="60.5" width="57" height="51"/><path d="M66.5 60.5L123.5 111.5"/></g><rect x="301.5" y="225" width="16" height="16" fill="#17966c"/><rect x="305" y="216" width="6" height="6" fill="#45b9f2"/><rect x="292" y="232" width="6" height="6" fill="#45b9f2"/><rect x="320" y="228" width="6" height="6" fill="#45b9f2"/><rect x="308.5" y="243.5" width="6" height="6" fill="#45b9f2"/><circle cx="309.5" cy="233" r="4.6" stroke="#e8fff4" stroke-width="1.1" fill="none"/><path d="M309.5 225.5V240.5M302.0 233H317.0" stroke="#e8fff4" stroke-width="1.1"/><path d="M306.5 230.0L271.9 204.0" stroke="#d41616" stroke-width="1.6"/><path d="M262.3 196.8L274.9 200.0L268.9 208.0Z" fill="#a80e0e"/><path d="M307.5 238.0L280.8 270.4" stroke="#28d028" stroke-width="1.6"/><path d="M272.8 280.0L276.9 267.2L284.6 273.5Z" fill="#129a12"/><g transform="translate(128,86)"><g fill="none" stroke-linecap="round" stroke-linejoin="round"><g stroke="#0a0604" stroke-width="3.5"><path d="M1.9 8L5.8 12M4.2 3L6.6 8M8 1.9V7.5M10.8 2.9L10.4 7.8M14.2 4.8L12.6 9"/><path d="M5.6 9.5L12.8 9L13.2 11L11.6 15.4H6.4L4.6 12Z" fill="#0a0604"/></g><g stroke="#f6dcae" stroke-width="2"><path d="M1.9 8L5.8 12M4.2 3L6.6 8M8 1.9V7.5M10.8 2.9L10.4 7.8M14.2 4.8L12.6 9"/></g><path d="M5.6 9.5L8 6.8L12.8 8.6L13.2 11L11.6 15.4H6.4L4.6 12Z" fill="#f2d29c" stroke="#f2d29c" stroke-width="1"/></g></g><path d="M9.5 318V329.5H21.5" stroke="#f4f4f4" stroke-width="1.2" fill="none"/><path d="M9.5 313.8L7.2 318.8H11.8Z M25.6 329.5L20.6 327.2V331.8Z" fill="#f4f4f4"/><text x="6.2" y="310.4" font-family="Liberation Serif" font-style="italic" font-size="12.5" fill="#e0e0e0">y</text><text x="26.6" y="333.2" font-family="Liberation Serif" font-style="italic" font-size="12.5" fill="#e0e0e0">x</text></svg>
</div>
<div class="vp" style="left:604px;top:103px;width:415px;height:338px">
<svg width="415" height="338" style="position:absolute;left:0;top:0"><g shape-rendering="crispEdges" fill="none" stroke-width="1"><path d="M2.5 0V338M7.5 0V338M13.5 0V338M18.5 0V338M23.5 0V338M29.5 0V338M40.5 0V338M45.5 0V338M51.5 0V338M56.5 0V338M62.5 0V338M67.5 0V338M73.5 0V338M78.5 0V338M83.5 0V338M94.5 0V338M100.5 0V338M105.5 0V338M111.5 0V338M116.5 0V338M122.5 0V338M127.5 0V338M133.5 0V338M138.5 0V338M149.5 0V338M154.5 0V338M160.5 0V338M165.5 0V338M171.5 0V338M176.5 0V338M182.5 0V338M187.5 0V338M193.5 0V338M203.5 0V338M209.5 0V338M214.5 0V338M220.5 0V338M225.5 0V338M231.5 0V338M236.5 0V338M242.5 0V338M247.5 0V338M258.5 0V338M263.5 0V338M269.5 0V338M274.5 0V338M280.5 0V338M285.5 0V338M291.5 0V338M296.5 0V338M302.5 0V338M313.5 0V338M318.5 0V338M323.5 0V338M329.5 0V338M334.5 0V338M340.5 0V338M345.5 0V338M351.5 0V338M356.5 0V338M367.5 0V338M373.5 0V338M378.5 0V338M383.5 0V338M389.5 0V338M394.5 0V338M400.5 0V338M405.5 0V338M411.5 0V338" stroke="#252525"/><path d="M34.5 0V338M89.5 0V338M143.5 0V338M198.5 0V338M253.5 0V338M362.5 0V338" stroke="#454545"/><path d="M307.5 0V338" stroke="#a2a2a2"/><g style="mix-blend-mode:plus-lighter"><path d="M0 0.5H415M0 6.5H415M0 11.5H415M0 16.5H415M0 27.5H415M0 33.5H415M0 38.5H415M0 44.5H415M0 49.5H415M0 55.5H415M0 60.5H415M0 66.5H415M0 71.5H415M0 82.5H415M0 87.5H415M0 93.5H415M0 98.5H415M0 104.5H415M0 109.5H415M0 115.5H415M0 120.5H415M0 126.5H415M0 136.5H415M0 142.5H415M0 147.5H415M0 153.5H415M0 158.5H415M0 164.5H415M0 169.5H415M0 175.5H415M0 180.5H415M0 191.5H415M0 196.5H415M0 202.5H415M0 207.5H415M0 213.5H415M0 218.5H415M0 224.5H415M0 229.5H415M0 235.5H415M0 246.5H415M0 251.5H415M0 256.5H415M0 262.5H415M0 267.5H415M0 273.5H415M0 278.5H415M0 284.5H415M0 289.5H415M0 300.5H415M0 306.5H415M0 311.5H415M0 316.5H415M0 322.5H415M0 327.5H415M0 333.5H415" stroke="#252525"/><path d="M0 22.5H415M0 76.5H415M0 131.5H415M0 240.5H415M0 295.5H415" stroke="#454545"/><path d="M0 186.5H415" stroke="#a2a2a2"/></g></g><g stroke="#a2a2a2" stroke-width="1" fill="none"><rect shape-rendering="crispEdges" x="356.5" y="136.5" width="44" height="50"/><path d="M356.5 136.5L400.5 186.5"/></g><path d="M217 186.5H246" stroke="#2ad62a" stroke-width="1.5"/><path d="M205.39999999999998 186.3L212.39999999999998 180.4H218.79999999999995V192.0H212.39999999999998Z" fill="#119311"/><path d="M215.5 180.4H218.79999999999995V192.0H215.5Z" fill="#0c7c0c"/><path d="M260 186.5H280" stroke="#d41414" stroke-width="1.5"/><ellipse cx="283.6" cy="186.20000000000002" rx="5.8" ry="6.1" fill="#a40e0e"/><ellipse cx="282.6" cy="186.20000000000002" rx="3.4" ry="4.2" fill="#c01414"/><rect x="246" y="179.10000000000002" width="14" height="14" fill="#17966c"/><path d="M253.1 185.3V137" stroke="#2272ea" stroke-width="2.4"/><path d="M253 126.5L261 138H245Z" fill="#1b52b4"/><rect x="236" y="173.2" width="6" height="5.6" fill="#45b9f2"/><rect x="236" y="193.2" width="6" height="5.6" fill="#45b9f2"/><rect x="248" y="173.2" width="10" height="5.6" fill="#45b9f2"/><rect x="248" y="193.2" width="10" height="5.6" fill="#45b9f2"/><rect x="264" y="173.2" width="6" height="5.6" fill="#45b9f2"/><rect x="264" y="193.2" width="6" height="5.6" fill="#45b9f2"/><circle cx="253.2" cy="186.3" r="4.1" stroke="#c4f4e0" stroke-width="1" fill="none" stroke-dasharray="4.4 2"/><path d="M9.5 318V329.5H21.5" stroke="#f4f4f4" stroke-width="1.2" fill="none"/><path d="M9.5 313.8L7.2 318.8H11.8Z M25.6 329.5L20.6 327.2V331.8Z" fill="#f4f4f4"/><text x="6.2" y="310.4" font-family="Liberation Serif" font-style="italic" font-size="12.5" fill="#e0e0e0">z</text><text x="26.6" y="333.2" font-family="Liberation Serif" font-style="italic" font-size="12.5" fill="#e0e0e0">y</text></svg>
</div>
<div class="vp" style="left:185px;top:445px;width:415px;height:255px">
<svg width="415" height="255" style="position:absolute;left:0;top:0"><path d="M263 152.5H291M276.5 157V224.5H291M276.5 176.5H291M276.5 200.5H291" stroke="#f6f6f6" stroke-width="1.1" fill="none"/><rect x="271.5" y="147.5" width="10" height="10" rx="2" fill="#9c9634" stroke="#d2cc6a" stroke-width="1"/><rect x="273" y="151" width="7" height="2.4" fill="#f2efb0"/></svg>
<div class="nd" style="left:149px;top:144px;width:114px;background:#4c4c4c;border-color:#6e6e6e"><i><svg width="16" height="16"><defs><pattern id="hz" width="4" height="4" patternUnits="userSpaceOnUse" patternTransform="rotate(45)"><rect width="2.2" height="4" fill="#f4e418"/><rect x="2.2" width="1.8" height="4" fill="#111"/></pattern></defs><rect x="3" y="3" width="10" height="10" fill="none" stroke="url(#hz)" stroke-width="2.6"/></svg></i><span id="nd0" style="color:#c6c6c6;transform:scaleX(0.9682);">Infinite Zone</span></div>
<div class="nd" style="left:290px;top:144px;width:114px;background:#7c7c7c;border-color:#a4a4a4"><i><svg width="16" height="16" viewBox="-0.5 -0.5 16 16"><path d="M7.5 7.8V3M7.5 7.8L3.2 11.6M7.5 7.8L11.8 11.6" stroke="#8fe09a" stroke-width="1.2"/><circle cx="7.5" cy="7.8" r="1.2" fill="#e8ffe8"/><circle cx="7.5" cy="3" r="1.4" fill="#9ad8a0"/><circle cx="3.2" cy="11.6" r="1.4" fill="#9ad8a0"/><circle cx="11.8" cy="11.6" r="1.4" fill="#9ad8a0"/></svg></i><span id="nd1" style="color:#fff;transform:scaleX(0.989);">Skybox</span></div>
<div class="nd" style="left:290px;top:168px;width:114px;background:#7c7c7c;border-color:#a4a4a4"><i><svg width="16" height="16" viewBox="0 0 16 16"><path d="M1.6 3.6L11 1.4L14.6 3V12.4L6.4 15L1.6 12.6Z" fill="#0b6a2c"/><path d="M1.6 3.6L11 1.4L14.6 3L6.4 5.6Z" fill="#2fb862"/><path d="M1.6 3.6L6.4 5.6V15L1.6 12.6Z" fill="#17994a"/><path d="M6.4 5.6L14.6 3V12.4L6.4 15Z" fill="#0e7f38"/></svg></i><span id="nd2" style="color:#fff;transform:scaleX(0.9497);">Plate</span></div>
<div class="nd" style="left:290px;top:192px;width:114px;background:#7c7c7c;border-color:#a4a4a4"><i><svg width="16" height="16" viewBox="0 0 16 16"><path d="M1.6 3.6L11 1.4L14.6 3V12.4L6.4 15L1.6 12.6Z" fill="#0b6a2c"/><path d="M1.6 3.6L11 1.4L14.6 3L6.4 5.6Z" fill="#2fb862"/><path d="M1.6 3.6L6.4 5.6V15L1.6 12.6Z" fill="#17994a"/><path d="M6.4 5.6L14.6 3V12.4L6.4 15Z" fill="#0e7f38"/></svg></i><span id="nd3" style="color:#fff;transform:scaleX(0.9405);">Box</span></div>
<div class="nd" style="left:290px;top:216px;width:114px;background:#0dbb83;border-color:#ffffff"><i><svg width="16" height="16" viewBox="-0.5 -0.5 16 16"><circle cx="7.5" cy="7.5" r="4.3" fill="none" stroke="#fff" stroke-width="1.1"/><path d="M7.5 1V14M1 7.5H14" stroke="#fff" stroke-width="1.1"/></svg></i><span id="nd4" style="color:#fff;transform:scaleX(0.9645);">Locator</span></div>
</div>
<div class="vp" style="left:604px;top:445px;width:415px;height:255px"></div>
</div></body></html>
